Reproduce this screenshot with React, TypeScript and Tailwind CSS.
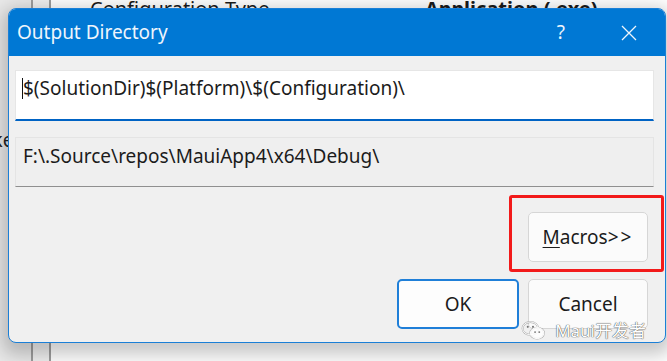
const ui = { fontFamily: '"Noto Sans", "Open Sans", "Noto Sans CJK SC", sans-serif' };

function WeChatMark() {
  return (
    <svg width="25" height="21" viewBox="0 0 24 20" className="shrink-0">
      <g fill="none" stroke="#666" strokeWidth="1.8" opacity="0.5">
        <ellipse cx="9" cy="8" rx="7.5" ry="6.2" />
        <ellipse cx="15.5" cy="12.5" rx="6.5" ry="5.3" />
      </g>
      <ellipse cx="9" cy="8" rx="7.5" ry="6.2" fill="none" stroke="#fff" strokeWidth="0.9" />
      <ellipse cx="15.5" cy="12.5" rx="6.5" ry="5.3" fill="#fff" fillOpacity="0.85" stroke="#fff" strokeWidth="0.9" />
      <circle cx="6.5" cy="6.5" r="1" fill="#777" />
      <circle cx="11.5" cy="6.5" r="1" fill="#777" />
      <circle cx="13.5" cy="11.5" r="0.9" fill="#777" />
      <circle cx="17.5" cy="11.5" r="0.9" fill="#777" />
    </svg>
  );
}

function Button({ children, primary }: { children: React.ReactNode; primary?: boolean }) {
  return (
    <button
      className={
        primary
          ? "w-[122px] h-[50px] rounded-[5px] border-2 border-[#1f7fd8] bg-[#fdfdfd] text-[19px] text-[#1b1b1b]"
          : "w-[120px] h-[50px] rounded-[5px] border border-[#d6d6d6] bg-[#fbfbfb] text-[19px] text-[#1b1b1b]"
      }
    >
      {children}
    </button>
  );
}

export default function App() {
  return (
    <div className="relative w-[667px] h-[361px] overflow-hidden bg-[#c9c9c9]" style={ui}>
      {/* property grid behind the dialog */}
      <div className="flex h-full">
        <div className="w-[31px] bg-[#e9e9e9] flex flex-col">
          <div className="mt-[128px] -ml-[34px] text-[19px] text-[#222] leading-[24px]">Linker</div>
        </div>
        <div className="w-[2px] bg-[#9d9d9d]" />
        <div className="w-[16px] bg-[#f0f0f0]" />
        <div className="w-[2px] bg-[#9d9d9d]" />
        <div className="flex-1 bg-white">
          <div className="flex -mt-[3px] text-[20px] leading-[24px] text-[#1b1b1b]">
            <span className="ml-[39px] w-[335px]">Configuration Type</span>
            <span className="font-bold">Application (.exe)</span>
          </div>
        </div>
      </div>

      {/* dialog window */}
      <div className="absolute left-[8px] top-[8px] w-[658px] h-[335px] rounded-[8px] border border-[#1b7fd6] bg-[#f0f0f0] overflow-hidden flex flex-col shadow-[0_6px_18px_6px_rgba(0,0,0,0.22)]">
        <div className="h-[47px] shrink-0 bg-[#0078d4] flex items-center pl-[8px] pr-[28px] text-[#eef5fc]">
          <span className="text-[19px]">Output Directory</span>
          <span className="ml-auto text-[19px] mr-[56px]">?</span>
          <svg width="16" height="16" viewBox="0 0 16 16">
            <path d="M1 1L15 15M15 1L1 15" stroke="#eef5fc" strokeWidth="1.3" fill="none" />
          </svg>
        </div>

        <div className="flex flex-col pl-[6px] pr-[11px]">
          <div className="mt-[14px] h-[51px] bg-white border border-[#e6e6e6] border-b-2 border-b-[#0063c4] flex items-start pl-[6px] pt-[4px]">
            <span className="w-px h-[21px] bg-[#111] mt-[3px]" />
            <span className="text-[19px] leading-[26px] text-[#1b1b1b]">$(SolutionDir)$(Platform)\$(Configuration)\</span>
          </div>

          <div className="mt-[16px] h-[50px] bg-[#efefef] border border-[#e4e4e4] border-b-[#8f8f8f] pl-[7px] pt-[5px] text-[19px] leading-[26px] text-[#1b1b1b]">
            F:\.Source\repos\MauiApp4\x64\Debug\
          </div>

          <div className="mt-[25px] flex justify-end pr-[6px]">
            <div className="relative">
              <div className="absolute -left-[19px] -top-[17px] -right-[16px] -bottom-[10px] border-[3px] border-[#f21a1a] rounded-[3px]" />
              <Button>
                <span className="underline underline-offset-[3px]">M</span>acros<span className="tracking-[2px]">&gt;&gt;</span>
              </Button>
            </div>
          </div>

          <div className="mt-[17px] flex justify-end gap-[9px] pr-[6px]">
            <Button primary>OK</Button>
            <Button>Cancel</Button>
          </div>
        </div>

        {/* watermark */}
        <div className="absolute right-[19px] bottom-[1px] flex items-center gap-[9px] text-[17px] leading-[20px] text-white [text-shadow:0_0_1px_#444,0_0_1px_#444]">
          <WeChatMark />
          <span>Maui开发者</span>
        </div>
      </div>
    </div>
  );
}
